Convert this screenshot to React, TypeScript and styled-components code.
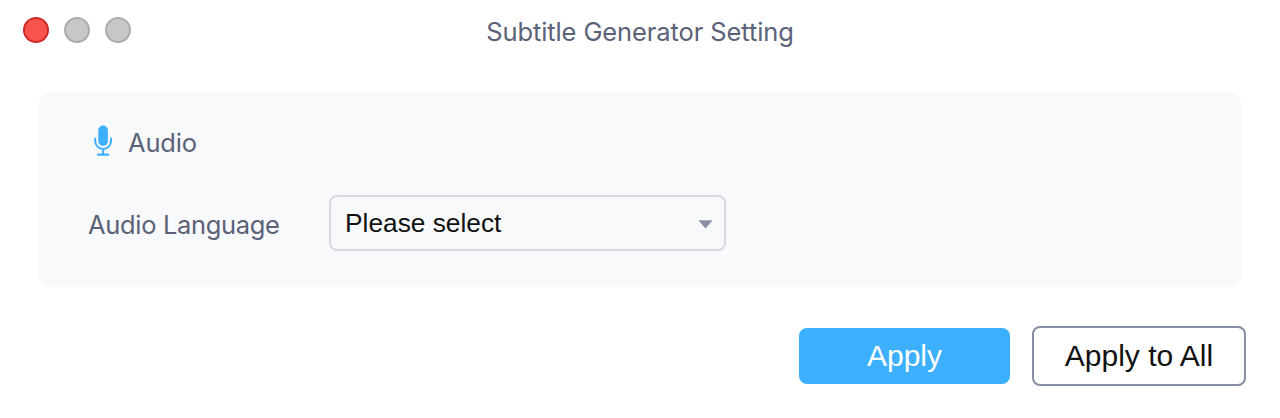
import React from "react";
import styled, { createGlobalStyle } from "styled-components";

const GlobalStyle = createGlobalStyle`
  * { box-sizing: border-box; }
  body { margin: 0; background: #fff; }
`;

const Window = styled.main`
  width: 1280px;
  height: 418px;
  background: #fff;
  color: #5b6277;
  font-family: Inter, "Liberation Sans", sans-serif;
  overflow: hidden;
`;

const TitleBar = styled.header`
  display: grid;
  grid-template-columns: 240px 1fr 240px;
  height: 92px;
`;

const Controls = styled.div`
  display: flex;
  gap: 15px;
  padding: 17px 0 0 22.5px;
`;

const Dot = styled.span<{ $fill: string; $edge: string }>`
  width: 26px;
  height: 26px;
  border-radius: 50%;
  background: ${(p) => p.$fill};
  border: 2px solid ${(p) => p.$edge};
`;

const Title = styled.h1`
  margin: 0;
  padding-top: 16px;
  text-align: center;
  font-size: 25.5px;
  line-height: 32px;
  font-weight: 400;
  letter-spacing: -0.1px;
  white-space: nowrap;
`;

const Panel = styled.section`
  width: 1204px;
  height: 195px;
  margin-left: 38px;
  padding: 32px 0 0 50px;
  border-radius: 15px;
  background: #f8f9fb;
`;

const Heading = styled.div`
  display: flex;
  align-items: flex-start;
  gap: 16px;
  height: 36px;
  padding: 1px 0 0 6px;
`;

const Label = styled.span<{ $spacing: string; $drop: string }>`
  display: block;
  padding-top: ${(p) => p.$drop};
  font-size: 25.5px;
  line-height: 32px;
  letter-spacing: ${(p) => p.$spacing};
  white-space: nowrap;
`;

const Field = styled.div`
  display: grid;
  grid-template-columns: 241px 397px;
  align-items: center;
  height: 56px;
  margin-top: 35px;
`;

const Select = styled.button`
  display: flex;
  align-items: center;
  justify-content: space-between;
  width: 397px;
  height: 56px;
  padding: 0 11px 0 14px;
  border: 2px solid #d8dae3;
  border-radius: 8px;
  background: #f8f9fb;
  color: #111;
  font: 26.3px "Liberation Sans", Arial, sans-serif;
`;

const Actions = styled.footer`
  display: flex;
  align-items: center;
  justify-content: flex-end;
  gap: 22px;
  padding: 39px 34px 0 0;
`;

const Button = styled.button<{ $primary?: boolean }>`
  width: ${(p) => (p.$primary ? "211px" : "214px")};
  height: ${(p) => (p.$primary ? "56px" : "60px")};
  padding: 0;
  border: ${(p) => (p.$primary ? "0" : "2px solid #868da4")};
  border-radius: 8px;
  background: ${(p) => (p.$primary ? "#3cb0ff" : "#fff")};
  color: ${(p) => (p.$primary ? "#fff" : "#111")};
  font: 30px "Liberation Sans", Arial, sans-serif;
  white-space: nowrap;
`;

const CaretIcon = styled.svg`
  margin-top: 2px;
`;

const Microphone = () => (
  <svg width="18" height="32" viewBox="0 0 18 32" fill="none">
    <rect x="4.3" y="0.5" width="9.6" height="20.5" rx="4.8" fill="#3cb0ff" />
    <path d="M1.2 13.5V16a7.9 7.9 0 0 0 15.8 0v-2.5M9.1 24.2v5" stroke="#3cb0ff" strokeWidth="2" strokeLinecap="round" />
    <path d="M4 29.6h10.4" stroke="#3cb0ff" strokeWidth="2.1" strokeLinecap="round" />
  </svg>
);

const Caret = () => (
  <CaretIcon width="15" height="9" viewBox="0 0 15 9">
    <path d="M0.3 0.3H14.7L7.5 8.6Z" fill="#8a90a5" />
  </CaretIcon>
);

export default function App() {
  return (
    <Window>
      <GlobalStyle />
      <TitleBar>
        <Controls>
          <Dot $fill="#f6544d" $edge="#cf2a26" />
          <Dot $fill="#c7c7c7" $edge="#acacac" />
          <Dot $fill="#c7c7c7" $edge="#acacac" />
        </Controls>
        <Title>Subtitle Generator Setting</Title>
      </TitleBar>
      <Panel>
        <Heading>
          <Microphone />
          <Label $spacing="-0.2px" $drop="2px">Audio</Label>
        </Heading>
        <Field>
          <Label $spacing="-0.33px" $drop="4px">Audio Language</Label>
          <Select type="button">
            <span>Please select</span>
            <Caret />
          </Select>
        </Field>
      </Panel>
      <Actions>
        <Button $primary>Apply</Button>
        <Button>Apply to All</Button>
      </Actions>
    </Window>
  );
}
